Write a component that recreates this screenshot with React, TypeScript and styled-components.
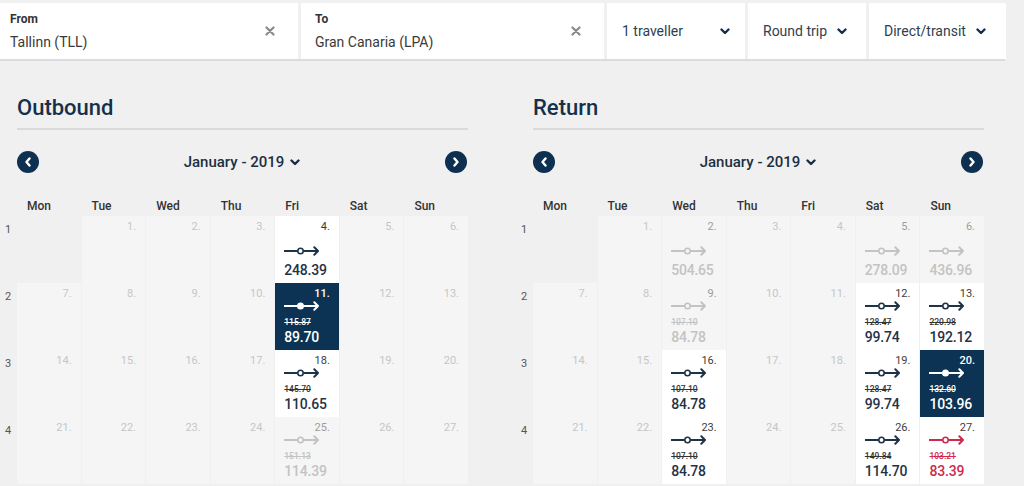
import React from "react";
import styled, { createGlobalStyle } from "styled-components";

const GlobalStyle = createGlobalStyle`
  html, body { margin: 0; padding: 0; background: #f0f0f0; overflow: hidden; }
  body { font-family: Roboto, "Liberation Sans", Arial, sans-serif; }
  * { box-sizing: border-box; }
`;

const Page = styled.div`
  width: 1024px;
  height: 486px;
  overflow: hidden;
  padding-top: 3px;
`;

/* ---------- top search bar ---------- */
const TopBar = styled.div`
  display: flex;
  gap: 3px;
  width: 1005px;
  height: 56px;
  box-shadow: 0 2px 0 #dcdcdc;
`;

const Field = styled.div<{ $w: number; $pl: number }>`
  display: flex;
  align-items: center;
  width: ${(p) => p.$w}px;
  flex: none;
  background: #fff;
  padding: 0 23px 0 ${(p) => p.$pl}px;
`;

const FieldText = styled.div`
  flex: 1;
  align-self: stretch;
  padding-top: 9px;
`;

const FieldLabel = styled.div`
  font-size: 12px;
  line-height: 15px;
  font-weight: 700;
  color: #333;
`;

const FieldValue = styled.div`
  margin-top: 6px;
  font-size: 14px;
  line-height: 18px;
  color: #3a3a3a;
`;

const Select = styled.div<{ $w: number; $spread?: boolean }>`
  display: flex;
  align-items: center;
  justify-content: ${(p) => (p.$spread ? "space-between" : "flex-start")};
  gap: 10px;
  width: ${(p) => p.$w}px;
  flex: none;
  background: #fff;
  padding: 0 15px;
  font-size: 14px;
  color: #2f3f4f;
`;

const ClearIcon = () => (
  <svg width="10" height="10" viewBox="0 0 10 10" stroke="#8a8a8a" strokeWidth="2.2" strokeLinecap="round">
    <path d="M1.5 1.5L8.5 8.5M8.5 1.5L1.5 8.5" />
  </svg>
);

const Chevron = ({ color = "#13304a" }: { color?: string }) => (
  <svg width="10" height="7" viewBox="0 0 10 7" fill="none" stroke={color} strokeWidth="2.4" strokeLinecap="round" strokeLinejoin="round">
    <path d="M1.5 1.5L5 5L8.5 1.5" />
  </svg>
);

/* ---------- calendars ---------- */
const Calendars = styled.div`
  display: flex;
  gap: 48px;
  margin-top: 36px;
`;

const Calendar = styled.section`
  width: 468px;
  flex: none;
`;

const Head = styled.div`
  margin-left: 17px;
`;

const Title = styled.h2`
  margin: 0;
  font-size: 22px;
  line-height: 26px;
  font-weight: 500;
  color: #15304a;
  padding-bottom: 7px;
  border-bottom: 2px solid #dadada;
`;

const Nav = styled.div`
  display: flex;
  align-items: center;
  justify-content: space-between;
  height: 22px;
  margin-top: 21px;
  width: 450px;
`;

const NavButton = styled.button`
  width: 22px;
  height: 22px;
  border: 0;
  padding: 0;
  border-radius: 50%;
  background: #0d3050;
  display: flex;
  align-items: center;
  justify-content: center;
`;

const Month = styled.div`
  display: flex;
  align-items: center;
  gap: 6px;
  font-size: 15px;
  font-weight: 500;
  color: #1c2f42;
`;

const GridRow = styled.div`
  display: grid;
  grid-template-columns: 16px repeat(7, 1fr);
  column-gap: 1px;
`;

const Weekdays = styled(GridRow)`
  margin-top: 26px;
  height: 14px;
`;

const Weekday = styled.div`
  font-size: 12px;
  line-height: 14px;
  font-weight: 500;
  color: #333;
  padding-left: 10px;
`;

const Days = styled(GridRow)`
  margin-top: 3px;
  grid-auto-rows: 67px;
`;

const WeekNum = styled.div`
  font-size: 11px;
  line-height: 13px;
  color: #555;
  text-align: center;
  padding-top: 7px;
`;

type Variant = "empty" | "off" | "muted" | "active" | "selected" | "deal";

const palette: Record<Variant, { bg: string; date: string; fg: string; old: string }> = {
  empty: { bg: "transparent", date: "transparent", fg: "transparent", old: "transparent" },
  off: { bg: "#f5f5f5", date: "#c6c6c6", fg: "#c3c3c3", old: "#c3c3c3" },
  muted: { bg: "#f5f5f5", date: "#9d9d9d", fg: "#c3c3c3", old: "#c3c3c3" },
  active: { bg: "#ffffff", date: "#3d3d3d", fg: "#1f3347", old: "#333333" },
  selected: { bg: "#0c3354", date: "#ffffff", fg: "#ffffff", old: "#ffffff" },
  deal: { bg: "#ffffff", date: "#3d3d3d", fg: "#cf2a4c", old: "#cf2a4c" },
};

const Cell = styled.div<{ $v: Variant }>`
  display: flex;
  flex-direction: column;
  padding: 4px 9px 4px 9px;
  background: ${(p) => palette[p.$v].bg};
  color: ${(p) => palette[p.$v].fg};
`;

const DateNum = styled.div<{ $v: Variant }>`
  align-self: flex-end;
  font-size: 11px;
  line-height: 13px;
  font-weight: ${(p) => (p.$v === "selected" ? 500 : 400)};
  color: ${(p) => palette[p.$v].date};
`;

const Fill = styled.div`
  flex: 1;
`;

const ArrowWrap = styled.div`
  display: flex;
  margin-bottom: 5px;
`;

const OldPrice = styled.div<{ $v: Variant }>`
  font-size: 8.5px;
  line-height: 12px;
  font-weight: 500;
  text-decoration: line-through;
  color: ${(p) => palette[p.$v].old};
`;

const Price = styled.div`
  font-size: 14px;
  line-height: 18px;
  font-weight: 500;
  letter-spacing: -0.2px;
`;

const FlightArrow = ({ filled }: { filled: boolean }) => (
  <svg width="36" height="10" viewBox="0 0 36 10" fill="none" stroke="currentColor" strokeWidth="2">
    <path d="M0 5H13.6M19.4 5H34" />
    <circle cx="16.5" cy="5" r="2.7" strokeWidth="1.6" fill={filled ? "currentColor" : "none"} />
    <path d="M30.3 1.3L34 5L30.3 8.7" strokeLinecap="round" strokeLinejoin="round" />
  </svg>
);

type Day = { d?: number; v: Variant; old?: string; price?: string };

const off = (d: number): Day => ({ d, v: "off" });
const E: Day = { v: "empty" };

const outbound: Day[][] = [
  [E, off(1), off(2), off(3), { d: 4, v: "active", price: "248.39" }, off(5), off(6)],
  [off(7), off(8), off(9), off(10), { d: 11, v: "selected", old: "115.87", price: "89.70" }, off(12), off(13)],
  [off(14), off(15), off(16), off(17), { d: 18, v: "active", old: "145.70", price: "110.65" }, off(19), off(20)],
  [off(21), off(22), off(23), off(24), { d: 25, v: "muted", old: "151.13", price: "114.39" }, off(26), off(27)],
];

const inbound: Day[][] = [
  [E, off(1), { d: 2, v: "muted", price: "504.65" }, off(3), off(4), { d: 5, v: "muted", price: "278.09" }, { d: 6, v: "muted", price: "436.96" }],
  [off(7), off(8), { d: 9, v: "muted", old: "107.10", price: "84.78" }, off(10), off(11), { d: 12, v: "active", old: "128.47", price: "99.74" }, { d: 13, v: "active", old: "220.98", price: "192.12" }],
  [off(14), off(15), { d: 16, v: "active", old: "107.10", price: "84.78" }, off(17), off(18), { d: 19, v: "active", old: "128.47", price: "99.74" }, { d: 20, v: "selected", old: "132.60", price: "103.96" }],
  [off(21), off(22), { d: 23, v: "active", old: "107.10", price: "84.78" }, off(24), off(25), { d: 26, v: "active", old: "149.84", price: "114.70" }, { d: 27, v: "deal", old: "103.21", price: "83.39" }],
];

const WEEKDAYS = ["Mon", "Tue", "Wed", "Thu", "Fri", "Sat", "Sun"];

const DayCell = ({ day }: { day: Day }) => (
  <Cell $v={day.v}>
    {day.d !== undefined && <DateNum $v={day.v}>{day.d}.</DateNum>}
    <Fill />
    {day.price && (
      <>
        <ArrowWrap>
          <FlightArrow filled={day.v === "selected"} />
        </ArrowWrap>
        {day.old && <OldPrice $v={day.v}>{day.old}</OldPrice>}
        <Price>{day.price}</Price>
      </>
    )}
  </Cell>
);

const CalendarView = ({ title, weeks }: { title: string; weeks: Day[][] }) => (
  <Calendar>
    <Head>
      <Title>{title}</Title>
      <Nav>
        <NavButton aria-label="Previous month">
          <svg width="8" height="10" viewBox="0 0 8 10" fill="none" stroke="#fff" strokeWidth="2.4" strokeLinecap="round" strokeLinejoin="round">
            <path d="M5.5 1.5L2.5 5L5.5 8.5" />
          </svg>
        </NavButton>
        <Month>
          January - 2019
          <Chevron color="#1c2f42" />
        </Month>
        <NavButton aria-label="Next month">
          <svg width="8" height="10" viewBox="0 0 8 10" fill="none" stroke="#fff" strokeWidth="2.4" strokeLinecap="round" strokeLinejoin="round">
            <path d="M2.5 1.5L5.5 5L2.5 8.5" />
          </svg>
        </NavButton>
      </Nav>
    </Head>
    <Weekdays>
      <span />
      {WEEKDAYS.map((w) => (
        <Weekday key={w}>{w}</Weekday>
      ))}
    </Weekdays>
    <Days>
      {weeks.map((week, i) => (
        <React.Fragment key={i}>
          <WeekNum>{i + 1}</WeekNum>
          {week.map((day, j) => (
            <DayCell key={j} day={day} />
          ))}
        </React.Fragment>
      ))}
    </Days>
  </Calendar>
);

export default function App() {
  return (
    <Page>
      <GlobalStyle />
      <TopBar>
        <Field $w={298} $pl={10}>
          <FieldText>
            <FieldLabel>From</FieldLabel>
            <FieldValue>Tallinn (TLL)</FieldValue>
          </FieldText>
          <ClearIcon />
        </Field>
        <Field $w={303} $pl={14}>
          <FieldText>
            <FieldLabel>To</FieldLabel>
            <FieldValue>Gran Canaria (LPA)</FieldValue>
          </FieldText>
          <ClearIcon />
        </Field>
        <Select $w={138} $spread>
          1 traveller
          <Chevron />
        </Select>
        <Select $w={118}>
          Round trip
          <Chevron />
        </Select>
        <Select $w={137}>
          Direct/transit
          <Chevron />
        </Select>
      </TopBar>
      <Calendars>
        <CalendarView title="Outbound" weeks={outbound} />
        <CalendarView title="Return" weeks={inbound} />
      </Calendars>
    </Page>
  );
}
